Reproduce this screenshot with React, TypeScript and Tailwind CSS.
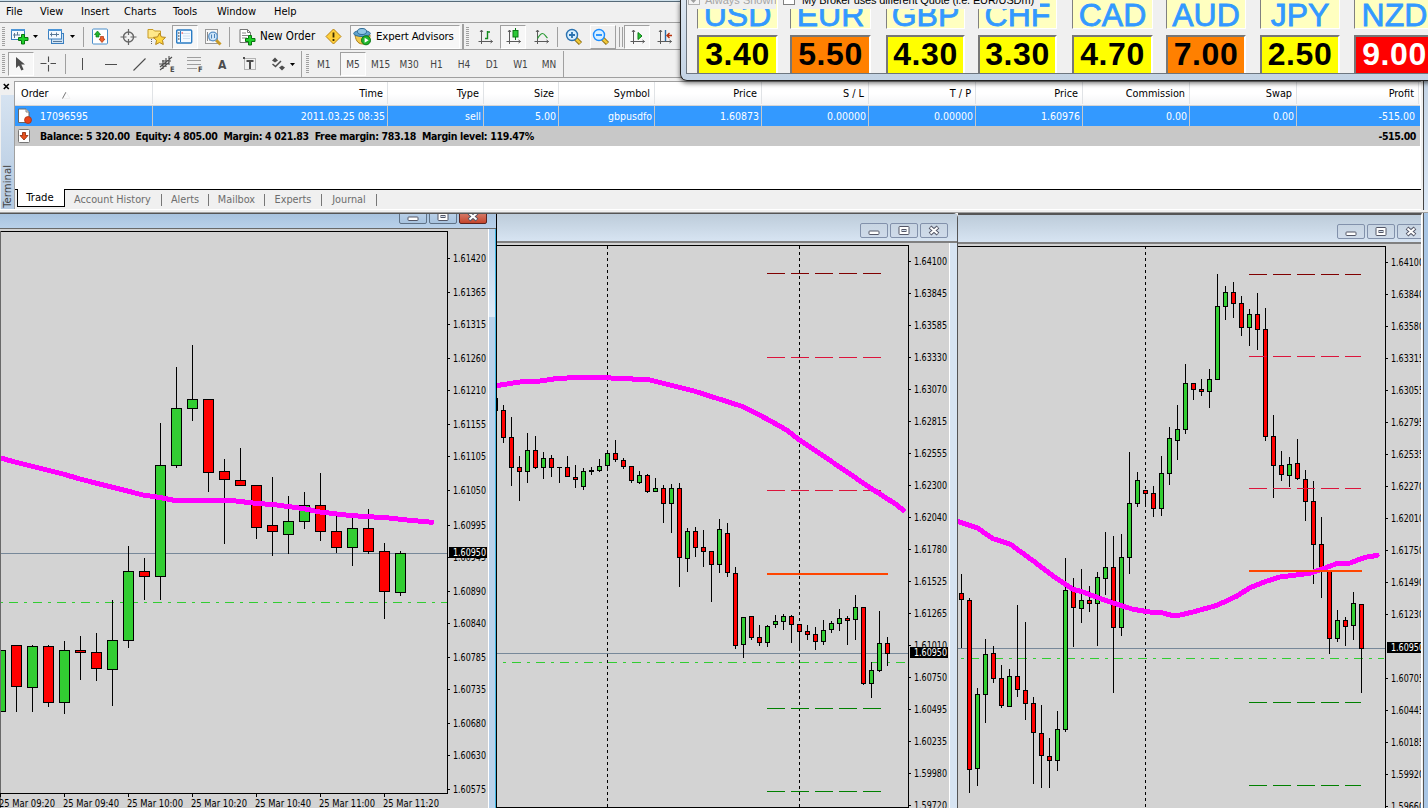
import React from "react";

type Candle = [number, number, number, number, "g" | "r"];

const FILL = { g: "#32cd32", r: "#ff0000" };
const UI = "font-['DejaVu_Sans_Condensed','DejaVu_Sans',sans-serif]";

/* Candles are [high, low, bodyTop, bodyBottom, direction] in pixel rows. */
const LEFT: Candle[] = [
  [650, 712, 650, 712, "g"], [645, 712, 645, 687, "r"], [645, 712, 646, 688, "g"], [645, 707, 646, 703, "r"],
  [641, 714, 650, 703, "g"], [636, 680, 650, 653, "r"], [633, 681, 652, 669, "r"], [600, 706, 640, 670, "g"],
  [546, 648, 571, 641, "g"], [558, 600, 571, 577, "r"], [423, 600, 465, 577, "g"], [367, 468, 408, 466, "g"],
  [345, 421, 399, 409, "g"], [399, 492, 399, 473, "r"], [459, 544, 471, 480, "r"], [448, 486, 480, 486, "r"],
  [485, 539, 485, 528, "r"], [477, 556, 525, 532, "r"], [496, 554, 521, 535, "g"], [492, 529, 505, 522, "g"],
  [473, 541, 505, 532, "r"], [513, 553, 531, 548, "r"], [517, 566, 528, 548, "g"], [509, 554, 528, 552, "r"],
  [543, 619, 551, 592, "r"], [551, 596, 553, 593, "g"],
];
const MIDDLE: Candle[] = [
  [405, 443, 410, 438, "r"], [417, 486, 437, 468, "r"], [456, 501, 467, 472, "r"], [433, 483, 450, 472, "g"],
  [436, 469, 450, 468, "r"], [452, 479, 458, 468, "g"], [455, 477, 458, 468, "r"], [467, 483, 467, 468, "r"],
  [456, 477, 467, 477, "r"], [465, 488, 477, 480, "r"], [468, 490, 471, 487, "g"], [467, 475, 470, 472, "r"],
  [459, 472, 466, 471, "g"], [450, 470, 453, 466, "g"], [440, 462, 453, 460, "r"], [458, 469, 460, 467, "r"],
  [466, 483, 466, 481, "r"], [471, 484, 475, 483, "g"], [474, 493, 475, 492, "r"], [478, 492, 488, 492, "g"],
  [485, 523, 488, 504, "r"], [484, 533, 488, 504, "g"], [483, 587, 488, 558, "r"], [528, 572, 531, 559, "g"],
  [527, 557, 531, 548, "r"], [530, 567, 547, 552, "r"], [551, 602, 551, 565, "r"], [519, 573, 529, 565, "g"],
  [523, 577, 533, 573, "r"], [567, 649, 573, 646, "r"], [617, 658, 617, 645, "g"], [616, 640, 616, 638, "r"],
  [625, 646, 637, 643, "r"], [625, 647, 626, 643, "g"], [615, 628, 621, 625, "g"], [614, 630, 616, 622, "g"],
  [615, 643, 616, 625, "r"], [624, 650, 624, 632, "r"], [625, 640, 631, 635, "r"], [627, 650, 634, 642, "r"],
  [620, 645, 630, 642, "g"], [621, 633, 623, 630, "g"], [609, 631, 618, 624, "g"], [616, 645, 618, 621, "r"],
  [595, 640, 607, 620, "g"], [607, 685, 607, 684, "r"], [662, 698, 670, 684, "g"], [611, 672, 643, 671, "g"],
  [637, 666, 643, 654, "r"],
];
const RIGHT: Candle[] = [
  [574, 648, 593, 600, "r"], [598, 793, 600, 770, "r"], [688, 786, 694, 769, "g"], [639, 723, 654, 695, "g"],
  [646, 683, 653, 679, "r"], [665, 708, 678, 706, "r"], [669, 707, 676, 707, "g"], [605, 697, 676, 690, "r"],
  [622, 720, 690, 704, "r"], [697, 784, 703, 733, "r"], [705, 788, 733, 756, "r"], [738, 788, 756, 761, "r"],
  [711, 771, 729, 761, "g"], [558, 732, 590, 730, "g"], [578, 647, 590, 608, "r"], [569, 623, 600, 609, "g"],
  [586, 612, 600, 604, "r"], [572, 646, 577, 604, "g"], [532, 595, 567, 579, "g"], [536, 693, 567, 628, "r"],
  [534, 636, 557, 628, "g"], [452, 574, 503, 558, "g"], [472, 507, 480, 504, "g"], [490, 505, 490, 494, "r"],
  [486, 517, 493, 509, "r"], [456, 516, 473, 509, "g"], [427, 485, 438, 474, "g"], [405, 460, 429, 441, "g"],
  [364, 434, 383, 430, "g"], [383, 400, 383, 390, "r"], [379, 396, 389, 392, "r"], [369, 408, 379, 392, "g"],
  [274, 380, 306, 380, "g"], [286, 320, 292, 307, "g"], [282, 318, 292, 304, "r"], [296, 336, 303, 328, "r"],
  [309, 346, 314, 328, "g"], [293, 350, 314, 330, "r"], [308, 441, 329, 437, "r"], [415, 498, 436, 466, "r"],
  [451, 481, 465, 475, "r"], [457, 487, 464, 476, "g"], [439, 480, 463, 479, "r"], [470, 521, 479, 502, "r"],
  [481, 584, 501, 545, "r"], [517, 598, 544, 572, "r"], [570, 654, 570, 639, "r"], [610, 642, 620, 639, "g"],
  [617, 646, 620, 627, "r"], [592, 640, 603, 626, "g"], [604, 693, 604, 649, "r"],
];

function Candles({ data, x, step, half }: { data: Candle[]; x: number; step: number; half: number }) {
  return (
    <g>
      {data.map(([hi, lo, top, bottom, dir], i) => {
        const cx = x + i * step;
        return (
          <g key={i}>
            <rect x={cx} y={hi} width={1} height={lo - hi} fill="#000" />
            <rect x={cx - half} y={top} width={half * 2 + 1} height={bottom - top} fill="#000" />
            {bottom - top > 2 && (
              <rect x={cx - half + 1} y={top + 1} width={half * 2 - 1} height={bottom - top - 2} fill={FILL[dir]} />
            )}
          </g>
        );
      })}
    </g>
  );
}

function Label({ x, y, children, fill = "#000", w = 33 }: { x: number; y: number; children: string; fill?: string; w?: number }) {
  return (
    <text x={x} y={y} fontSize={9.6} fill={fill} textLength={w} lengthAdjust="spacingAndGlyphs" fontFamily="DejaVu Sans Condensed, DejaVu Sans, sans-serif">
      {children}
    </text>
  );
}

function PriceAxis({ x, ticks }: { x: number; ticks: [number, string][] }) {
  return (
    <g>
      {ticks.map(([y, v]) => (
        <g key={v}>
          <rect x={x + 1} y={y} width={2} height={1} fill="#000" />
          <Label x={x + 6} y={y + 3.5}>{v}</Label>
        </g>
      ))}
    </g>
  );
}

function PriceTag({ x, y, w = 38 }: { x: number; y: number; w?: number }) {
  return (
    <g>
      <rect x={x} y={y} width={w} height={11} fill="#000" />
      <Label x={x + 4} y={y + 9} fill="#fff">1.60950</Label>
    </g>
  );
}

const series = (start: number, step: number, values: string[]): [number, string][] =>
  values.map((v, i) => [start + i * step, v]);

const LEFT_TICKS: [number, string][] = [
  [258, "1.61420"], [292, "1.61365"], [324, "1.61315"], [358, "1.61260"], [390, "1.61210"], [424, "1.61155"],
  [456, "1.61105"], [490, "1.61050"], [525, "1.60995"], [557, "1.60945"], [591, "1.60890"], [623, "1.60840"],
  [657, "1.60785"], [689, "1.60735"], [723, "1.60680"], [755, "1.60630"], [789, "1.60575"],
];
const MID_TICKS = series(261, 32, [
  "1.64100", "1.63845", "1.63585", "1.63330", "1.63070", "1.62815", "1.62555", "1.62300", "1.62040",
  "1.61780", "1.61525", "1.61265", "1.61010", "1.60750", "1.60495", "1.60235", "1.59980", "1.59720",
]);
const RIGHT_TICKS = series(262, 32, [
  "1.64100", "1.63840", "1.63580", "1.63315", "1.63055", "1.62795", "1.62535", "1.62270", "1.62010",
  "1.61750", "1.61490", "1.61230", "1.60970", "1.60705", "1.60445", "1.60185", "1.59920", "1.59660",
]).filter(([, v]) => v !== "1.60970");

function Average({ points }: { points: string }) {
  return <polyline points={points} fill="none" stroke="#ff00ff" strokeWidth={5} strokeLinejoin="round" strokeLinecap="round" />;
}

function Levels({ x, to, rows }: { x: number; to: number; rows: [number, string][] }) {
  return (
    <g>
      {rows.map(([y, c]) => (
        <line key={y} x1={x} x2={to} y1={y + 0.5} y2={y + 0.5} stroke={c} strokeDasharray="18 6" />
      ))}
    </g>
  );
}

function LeftChart() {
  return (
    <svg className="block shrink-0" width={488} height={579} viewBox="0 229 488 579" shapeRendering="crispEdges">
      <rect x={0} y={229} width={488} height={579} fill="#d3d3d3" />
      <rect x={0} y={231} width={448} height={1} fill="#000" />
      <rect x={0} y={553} width={447} height={1} fill="#778899" />
      <line x1={-15} x2={447} y1={602.5} y2={602.5} stroke="#32cd32" strokeDasharray="9 6 3 6" />
      <Candles data={LEFT} x={0} step={16} half={5} />
      <Average points="-3,457 15,462 63,474 80,479 143,495 160,497.5 175,500.5 232,500.5 257,503.5 273,504.5 303,508.5 320,512 350,515.5 387,517.8 407,520 432,522.3" />
      <rect x={0} y={231} width={1} height={577} fill="#696969" />
      <rect x={447} y={231} width={1} height={563} fill="#000" />
      <rect x={0} y={793} width={448} height={1} fill="#000" />
      <PriceAxis x={447} ticks={LEFT_TICKS} />
      <PriceTag x={449} y={547} />
      {["09:20", "09:40", "10:00", "10:20", "10:40", "11:00", "11:20"].map((t, i) => (
        <g key={t}>
          <rect x={i * 64} y={794} width={1} height={3} fill="#000" />
          <Label x={i * 64 - 1} y={806.5} w={56}>{"25 Mar " + t}</Label>
        </g>
      ))}
    </svg>
  );
}

function MiddleChart() {
  return (
    <svg className="block shrink-0" width={452} height={565} viewBox="497 243 452 565" shapeRendering="crispEdges">
      <rect x={497} y={243} width={452} height={565} fill="#d3d3d3" />
      <rect x={497} y={245} width={412} height={1} fill="#000" />
      <line x1={607.5} x2={607.5} y1={246} y2={807} stroke="#000" strokeDasharray="3 3" />
      <line x1={799.5} x2={799.5} y1={246} y2={807} stroke="#000" strokeDasharray="3 3" />
      <rect x={497} y={653} width={411} height={1} fill="#778899" />
      <line x1={488} x2={906} y1={662.5} y2={662.5} stroke="#32cd32" strokeDasharray="9 6 3 6" />
      <rect x={497} y={398} width={1} height={13} fill="#000" />
      <Candles data={MIDDLE} x={503} step={8} half={2} />
      <Levels x={767} to={881} rows={[[273, "#800000"], [357, "#dc143c"], [490, "#dc143c"], [708, "#008000"], [791, "#008000"]]} />
      <Average points="494,386 523,381.5 540,381 557,378.5 577,377.5 600,377.5 627,378.7 650,380 670,385 693,390.7 720,399.3 742,406.3 767,419 787,430.3 799,439.7 823,455.7 843,469.3 867,485.7 897,505 903,510" />
      <rect x={767} y={573} width={121} height={2} fill="#ff4500" />
      <rect x={908} y={245} width={1} height={563} fill="#000" />
      <rect x={497} y={807} width={412} height={1} fill="#000" />
      <PriceAxis x={908} ticks={MID_TICKS} />
      <PriceTag x={910} y={647} />
    </svg>
  );
}

function RightChart() {
  return (
    <svg className="block shrink-0" width={463} height={564} viewBox="958 244 463 564" shapeRendering="crispEdges">
      <rect x={958} y={244} width={463} height={564} fill="#d3d3d3" />
      <rect x={958} y={246} width={428} height={1} fill="#000" />
      <line x1={1145.5} x2={1145.5} y1={246} y2={808} stroke="#000" strokeDasharray="3 3" />
      <rect x={958} y={648} width={427} height={1} fill="#778899" />
      <line x1={946} x2={1384} y1={658.5} y2={658.5} stroke="#32cd32" strokeDasharray="9 6 3 6" />
      <Candles data={RIGHT} x={961} step={8} half={2} />
      <Levels x={1249} to={1361} rows={[[274, "#800000"], [356, "#dc143c"], [488, "#dc143c"], [702, "#008000"], [785, "#008000"]]} />
      <Average points="955,520.5 978,528.3 985,533.3 993,538.7 1010,544 1033,560.7 1053,576 1073,589.3 1083,592 1097,597.3 1113,603 1133,609.3 1150,612 1162,612.7 1172,615.5 1180,615 1193,612 1217,605.3 1237,596 1250,587.7 1267,581 1280,577 1310,573.3 1327,567.3 1337,563.5 1350,563 1365,557.3 1377,555.5" />
      <rect x={1249} y={570} width={113} height={2} fill="#ff4500" />
      <rect x={1385} y={246} width={1} height={562} fill="#000" />
      <PriceAxis x={1385} ticks={RIGHT_TICKS} />
      <PriceTag x={1387} y={642} />
    </svg>
  );
}

function CaptionButton({ kind, active = false }: { kind: "min" | "max" | "close"; active?: boolean }) {
  const red = active && kind === "close";
  return (
    <div
      className={
        "flex h-[15px] w-[28px] shrink-0 items-center justify-center rounded-[2px] border " +
        (red
          ? "border-[#5a2320] bg-gradient-to-b from-[#d98a7c] to-[#c4452b]"
          : active
            ? "border-[#5f7287] bg-gradient-to-b from-[#bdd3ea] to-[#a9c4e0]"
            : "border-[#8291ab] bg-gradient-to-b from-[#c8d5e2] to-[#cfdbea]")
      }
    >
      <svg width={13} height={11} viewBox="0 0 13 11">
        {kind === "min" && <rect x={1} y={6} width={10} height={3.5} rx={0.8} fill="#fff" stroke="#535666" />}
        {kind === "max" && (
          <g stroke="#535666">
            <rect x={1} y={1.5} width={10} height={8} rx={0.8} fill="#fff" />
            <rect x={4} y={4.5} width={4} height={2} fill="#cfdbea" />
          </g>
        )}
        {kind === "close" && (
          <g fill="none">
            <path d="M2 2l8 7M10 2l-8 7" stroke="#535666" strokeWidth={4} />
            <path d="M2.500 2.400l7 6.200M9.500 2.400l-7 6.200" stroke="#fff" strokeWidth={2} />
          </g>
        )}
      </svg>
    </div>
  );
}

function Grip() {
  return (
    <svg className="shrink-0" width={4} height={20} viewBox="0 0 4 20" shapeRendering="crispEdges">
      {Array.from({ length: 10 }, (_, i) => (
        <rect key={i} x={0} y={i * 2} width={3} height={1} fill="#a0a0a0" />
      ))}
    </svg>
  );
}

function Slot({ className, children }: { className: string; children?: React.ReactNode }) {
  return <div className={"flex h-full shrink-0 items-center " + className}>{children}</div>;
}

function Pressed({ className, children }: { className: string; children?: React.ReactNode }) {
  return (
    <div className={"flex h-6 shrink-0 items-center border border-t-[#a0a0a0] border-l-[#a0a0a0] border-r-white border-b-white bg-[#f7f7f7] " + className}>
      {children}
    </div>
  );
}

const Sep = () => <div className="h-5 w-px bg-[#a0a0a0]" />;

function Icon({ children, size = 18 }: { children: React.ReactNode; size?: number }) {
  return <svg className="shrink-0" width={size} height={size} viewBox={`0 0 ${size} ${size}`}>{children}</svg>;
}

const Caret = () => (
  <svg className="shrink-0" width={5} height={3} viewBox="0 0 5 3"><path d="M0 0h5L2.500 3z" fill="#000" /></svg>
);

const Plus = ({ x, y }: { x: number; y: number }) => (
  <path transform={`translate(${x} ${y})`} d="M3.500 0.500h3v3h3.500v3h-3.500v3.500h-3v-3.500h-3v-3h3z" fill="#1fd02a" stroke="#07760f" />
);

function Lens({ color, minus }: { color: string; minus?: boolean }) {
  return (
    <Icon>
      <path d="M10.500 10.500l5 5" stroke="#8a6a10" strokeWidth={4.500} />
      <path d="M10.500 10.500l4.700 4.700" stroke="#f0c93a" strokeWidth={2.600} />
      <circle cx={7} cy={7} r={5.500} fill="#d8efff" stroke={color} strokeWidth={1.400} />
      <path d={minus ? "M4 7h6" : "M4 7h6M7 4v6"} stroke={color} strokeWidth={1.800} />
    </Icon>
  );
}

const Axes = () => (
  <path d="M3.500 2v14M0.500 13.500h14M2 4l1.500-2 1.500 2M12.500 12l2 1.500-2 1.500" fill="none" stroke="#5a5a5a" />
);

function MainToolbar() {
  return (
    <div className="flex h-[27px] items-center border-b border-[#a0a0a0] pt-px">
      <Slot className="w-[10px] pl-0.5"><Grip /></Slot>
      <Slot className="w-[22px] pl-px">
        <Icon>
          <rect x={0.500} y={1.500} width={13} height={10} fill="#f4faff" stroke="#3a7fc0" />
          <rect x={0} y={1} width={14} height={2} fill="#4d96d8" />
          <path d="M3.500 5v5M2 7h7M6.500 4v3" stroke="#5a7896" />
          <Plus x={7} y={6} />
        </Icon>
      </Slot>
      <Slot className="w-[15px] pl-px"><Caret /></Slot>
      <Slot className="w-[22px] pl-px">
        <Icon>
          <rect x={3.500} y={5.500} width={12} height={10} fill="#cfe3f5" stroke="#3a7fc0" />
          <rect x={0.500} y={1.500} width={13} height={9.500} fill="#f4faff" stroke="#3a7fc0" />
          <rect x={0} y={1} width={14} height={2} fill="#4d96d8" />
          <path d="M3.500 4.500v4M2 6.500h9M8.500 4.500v4" stroke="#5a7896" />
          <path d="M5 13.500h9" stroke="#5a7896" />
        </Icon>
      </Slot>
      <Slot className="w-[14px] pl-px"><Caret /></Slot>
      <Slot className="w-[8px]"><Sep /></Slot>
      <Slot className="w-[29px] pl-px">
        <Icon>
          <rect x={0.500} y={1} width={15} height={15} rx={1} fill="#fff" stroke="#4a8fcc" />
          <path d="M2.500 6.500l3-3.500 3 3.500H7v2.500H4V6.500z" fill="#22b52c" stroke="#0a7a14" strokeWidth={0.700} />
          <path d="M7 11h1.500V8.500h3V11H13l-3 3.500z" fill="#f0602a" stroke="#a8320c" strokeWidth={0.700} />
        </Icon>
      </Slot>
      <Slot className="w-[26px]">
        <Icon>
          <circle cx={8.500} cy={9} r={5} fill="none" stroke="#666" strokeWidth={1.400} />
          <path d="M8.500 1v6M8.500 11v6M0.500 9h6M10.500 9h6" stroke="#666" strokeWidth={1.200} />
        </Icon>
      </Slot>
      <Slot className="w-[26px] pl-px">
        <Icon size={19}>
          <path d="M1 2.500h5l1.500 1.500h6v7H1z" fill="#ffe88a" stroke="#c79a22" />
          <path d="M4.500 12v5" stroke="#666" strokeDasharray="1 1" />
          <path d="M12.500 6l1.900 3.900 4.100.5-3 2.900.8 4.200-3.800-2-3.800 2 .8-4.200-3-2.900 4.100-.5z" fill="#ffd742" stroke="#b4841a" />
        </Icon>
      </Slot>
      <Pressed className="w-[26px] pl-[3px]">
        <Icon size={17}>
          <rect x={0.700} y={2} width={15} height={13} rx={1} fill="#f5faff" stroke="#2a7cc4" strokeWidth={1.400} />
          <path d="M4.500 3v11" stroke="#2a7cc4" />
          <path d="M7 5.500h7M7 8h7M7 10.500h7" stroke="#cfe0f0" />
          <path d="M2 5h1.500M2 8h1.500M2 11h1.500" stroke="#222" />
          <path d="M5.500 5h1.500" stroke="#e22" />
        </Icon>
      </Pressed>
      <Slot className="w-[31px] pl-[6px]">
        <Icon>
          <rect x={1.500} y={1.500} width={12} height={14} fill="#f8f8f8" stroke="#999" />
          <path d="M3.500 4v9M5 12h6" stroke="#888" />
          <path d="M12 12l4.500 4.500" stroke="#c89a28" strokeWidth={3} />
          <circle cx={9} cy={8.500} r={4.300} fill="#cfe6fa" stroke="#5a92c8" strokeWidth={1.300} />
          <path d="M7.500 6.500v4M10.500 6v4" stroke="#4a82b8" />
        </Icon>
      </Slot>
      <Slot className="w-[9px]"><Sep /></Slot>
      <Slot className="w-[21px] pl-px">
        <Icon>
          <path d="M1 1.500h7.500l3 3v10H1z" fill="#fff" stroke="#777" />
          <path d="M8.500 1.500v3h3" fill="none" stroke="#777" />
          <path d="M3 5h4M3 7.500h6M3 10h5" stroke="#888" />
          <Plus x={6} y={7} />
        </Icon>
      </Slot>
      <Slot className="w-[65px] pt-px pl-px text-[11.5px] whitespace-nowrap">New Order</Slot>
      <Slot className="w-[26px] pl-px">
        <Icon size={17}>
          <path d="M8.500 1L16 8.500 8.500 16 1 8.500z" fill="#ffcf3a" stroke="#b98412" strokeLinejoin="round" />
          <path d="M8.500 4.500v5M8.500 11v2" stroke="#3a2c00" strokeWidth={1.800} />
        </Icon>
      </Slot>
      <Pressed className="w-[110px] gap-[4px] pl-[2px]">
        <Icon size={19}>
          <path d="M2 8c1 7 4 9 8 9s7-3 7-9z" fill="#f2ca4e" stroke="#a97e1a" />
          <ellipse cx={9} cy={6.500} rx={8.300} ry={3} fill="#5fa3cf" stroke="#2d6b94" />
          <ellipse cx={9} cy={4.500} rx={4.500} ry={3} fill="#8fc6e6" stroke="#2d6b94" />
          <circle cx={13} cy={13.300} r={4.500} fill="#22b52c" stroke="#0a7a14" />
          <path d="M11.600 10.800v5l4-2.500z" fill="#fff" />
        </Icon>
        <span className="pt-px text-[11.3px] tracking-[-0.12px] whitespace-nowrap">Expert Advisors</span>
      </Pressed>
      <Slot className="w-[6px] pl-0.5"><div className="h-[26px] w-0.5 bg-[#a0a0a0]" /></Slot>
      <Slot className="w-[11px]"><Grip /></Slot>
      <Slot className="w-[23px] pl-px">
        <Icon><Axes /><path d="M7 10.500h2.500v-6.500h2.500M9.500 4v-1" fill="none" stroke="#138a1d" strokeWidth={1.400} /></Icon>
      </Slot>
      <Pressed className="w-[26px] pl-[5px]">
        <Icon><Axes /><path d="M9.500 0v12" stroke="#0a7a14" /><rect x={7} y={2.500} width={5} height={6.500} fill="#2cc836" stroke="#0a7a14" /></Icon>
      </Pressed>
      <Slot className="w-[31px] pl-[8px]">
        <Icon><Axes /><path d="M3.500 10.500c2-3 3-5 5-5s3 2.500 5 4.500" fill="none" stroke="#2a9a34" strokeWidth={1.200} /></Icon>
      </Slot>
      <Slot className="w-[8px]"><Sep /></Slot>
      <Slot className="w-[25px]"><Lens color="#2a72b0" /></Slot>
      <div className="flex h-6 w-[26px] shrink-0 items-center border border-t-white border-l-white border-r-[#a0a0a0] border-b-[#a0a0a0] pl-px">
        <Lens color="#1a8cff" minus />
      </div>
      <Slot className="w-[8px] gap-0.5 pl-[3px]"><Sep /><Sep /></Slot>
      <Pressed className="w-[26px] pl-[5px]">
        <Icon><Axes /><path d="M8 4.500v7l4-3.500z" fill="#2cc836" stroke="#0a7a14" /></Icon>
      </Pressed>
      <Slot className="w-[30px] pl-[7px]">
        <Icon><Axes /><path d="M8.500 2v11" stroke="#2a6ca8" strokeWidth={1.400} /><path d="M10 7.500h5M12.500 5l-2.500 2.500 2.500 2.500" fill="none" stroke="#b8320c" strokeWidth={1.400} /></Icon>
      </Slot>
    </div>
  );
}

function DrawToolbar() {
  return (
    <div className="flex h-[27px] items-center border-b border-[#a0a0a0] text-[#4d4d4d]">
      <Slot className="w-[8px] pl-0.5"><Grip /></Slot>
      <Pressed className="w-[26px] pl-[6px]">
        <Icon size={16}><path d="M1 1l0 11 3-2.500 2.300 5 2.300-1-2.300-5H10z" fill="#4d4d4d" /></Icon>
      </Pressed>
      <Slot className="w-[31px] pl-[6px]">
        <Icon size={16}><path d="M8.500 0.500v5.500M8.500 9v6.500M0.500 7.500h6M10.500 7.500h5.500" stroke="#4d4d4d" strokeWidth={1.100} /></Icon>
      </Slot>
      <Slot className="w-[17px]"><Sep /></Slot>
      <Slot className="w-[23px]"><div className="h-3 w-px bg-[#4d4d4d]" /></Slot>
      <Slot className="w-[28px]"><div className="h-px w-3 bg-[#4d4d4d]" /></Slot>
      <Slot className="w-[26px]"><Icon size={13}><path d="M0.500 12.500l12-12" stroke="#4d4d4d" strokeWidth={1.100} /></Icon></Slot>
      <Slot className="w-[28px]">
        <Icon size={18}>
          <path d="M1 12L13 2M1 15L10 7.500M4 5v9M7 3v9M10 1v9M0 9h8M3 6h9" stroke="#4d4d4d" strokeWidth={1.100} />
          <text x={11} y={17} fontSize={7.5} fontWeight={700} fill="#4d4d4d" fontFamily="DejaVu Sans Condensed">E</text>
        </Icon>
      </Slot>
      <Slot className="w-[31px]">
        <Icon size={18}>
          <path d="M0.500 2.500h14M0.500 5.500h14M0.500 9.500h14M0.500 13.500h9" stroke="#4d4d4d" strokeDasharray="1 1" />
          <text x={11} y={17} fontSize={7.5} fontWeight={700} fill="#4d4d4d" fontFamily="DejaVu Sans Condensed">F</text>
        </Icon>
      </Slot>
      <Slot className="w-[25px] pt-px text-[12px] font-bold">A</Slot>
      <Slot className="w-[28px]">
        <Icon size={14}>
          <rect x={1.500} y={1.500} width={11} height={11} fill="none" stroke="#777" strokeDasharray="1 1" />
          <rect x={0} y={0} width={2} height={2} fill="#4d4d4d" />
          <path d="M3.500 4h7M7 4v8" stroke="#4d4d4d" strokeWidth={2} />
        </Icon>
      </Slot>
      <Slot className="w-[19px]">
        <Icon size={16}>
          <path d="M1 4.500l3-3 3 3-3 2z M8 11.500l3-2 3 2-3 3z" fill="#4d4d4d" />
          <path d="M1.500 8l3 2.500L10 5" fill="none" stroke="#4d4d4d" strokeWidth={1.500} />
        </Icon>
      </Slot>
      <Slot className="w-[11px]"><Caret /></Slot>
      <Slot className="w-[5px]"><div className="h-[26px] w-px bg-[#a0a0a0]" /></Slot>
      <Slot className="w-[8px]"><Grip /></Slot>
      <div className="flex items-center text-[10px] text-[#444]">
        <span className="w-[26px] pt-px pl-[3px]">M1</span>
        <Pressed className="w-[26px] justify-center pt-px">M5</Pressed>
        <span className="w-[29px] pt-px text-center">M15</span>
        <span className="w-[28px] pt-px text-center">M30</span>
        <span className="w-[27px] pt-px text-center">H1</span>
        <span className="w-[28px] pt-px text-center">H4</span>
        <span className="w-[28px] pt-px text-center">D1</span>
        <span className="w-[29px] pt-px text-center">W1</span>
        <span className="w-[28px] pt-px text-center">MN</span>
      </div>
      <Slot className="w-[2px]"><div className="h-[26px] w-px bg-[#a0a0a0]" /></Slot>
    </div>
  );
}

const COLUMNS: [string, string, string][] = [
  ["w-[235px]", "Time", "2011.03.25 08:35"],
  ["w-[96px]", "Type", "sell"],
  ["w-[75px]", "Size", "5.00"],
  ["w-[96px]", "Symbol", "gbpusdfo"],
  ["w-[107px]", "Price", "1.60873"],
  ["w-[107px]", "S / L", "0.00000"],
  ["w-[107px]", "T / P", "0.00000"],
  ["w-[107px]", "Price", "1.60976"],
  ["w-[107px]", "Commission", "0.00"],
  ["w-[107px]", "Swap", "0.00"],
  ["w-[122px]", "Profit", "-515.00"],
];

function Terminal() {
  return (
    <div className="flex h-[129px] border-b border-white">
      <div className="flex w-[14px] shrink-0 flex-col items-center">
        <svg className="mt-px mr-0.5 h-[9px] shrink-0" width={7} height={6} viewBox="0 0 7 6"><path d="M0.800 0.500l5 5M5.800 0.500l-5 5" stroke="#000" strokeWidth={1.600} /></svg>
        <div className="mt-[4px] flex min-h-0 w-[13px] flex-1 items-start justify-center bg-gradient-to-b from-[#d6e3f1] to-[#b4c9e0] pt-[68px] [writing-mode:vertical-rl]">
          <span className="rotate-180 text-[11.3px] leading-[13px] text-[#444]">Terminal</span>
        </div>
      </div>
      <div className="flex w-[1407px] flex-col border-l border-[#a0a0a0]">
        <div className="flex min-h-0 flex-1 flex-col border-t border-[#a0a0a0] bg-white text-[10.5px]">
          <div className="flex h-6 w-[1405px] border-b border-[#d5d5d5] bg-gradient-to-b from-white from-50% to-[#f3f4f6] pb-px">
            <div className="flex w-[138px] items-center gap-[13px] border-r border-[#e0e3e6] pt-[3px] pl-[6px] text-[10.8px]">
              Order
              <svg width={9} height={8} viewBox="0 0 9 8"><path d="M0.500 7.500L4 1" stroke="#777" fill="none" /><path d="M4 1l4 6.500H1" stroke="#f1f1f1" fill="none" /></svg>
            </div>
            {COLUMNS.map(([w, head], i) => (
              <div key={i} className={"flex items-center justify-end border-r border-[#e0e3e6] pt-[3px] pr-[4px] text-[10.8px] " + w}>{head}</div>
            ))}
          </div>
          <div className="flex h-5 w-[1405px] bg-[#3399ff] text-white">
            <div className="flex w-[138px] items-center gap-[8px] border-r border-[#c8c8c8] pl-[3px]">
              <svg width={14} height={16} viewBox="0 0 14 16">
                <path d="M0.500 1h7.500l3 3v10.500H0.500z" fill="#fff" stroke="#666" />
                <path d="M8 1v3h3" fill="#ddd" stroke="#888" />
                <circle cx={10} cy={12} r={3.500} fill="#e8441c" stroke="#a82c08" strokeWidth={0.700} />
              </svg>
              <span className="pt-0.5">17096595</span>
            </div>
            {COLUMNS.map(([w, , cell], i) => (
              <div key={i} className={"flex items-center justify-end pt-0.5 pr-0.5 " + (i < 10 ? "border-r border-[#c8c8c8] " : "pr-[4px] ") + w}>{cell}</div>
            ))}
          </div>
          <div className="flex h-5 w-[1405px] items-center justify-between bg-[#c8c8c8] pr-[4px] pl-[3px] text-[10.5px] font-bold">
            <div className="flex items-center gap-[10px]">
              <svg width={12} height={14} viewBox="0 0 12 14">
                <rect x={0.500} y={0.500} width={11} height={13} rx={1} fill="#fff" stroke="#777" />
                <path d="M4.500 3.500h3v3h2.500L6 11 2 6.500h2.500z" fill="#e8501c" stroke="#8a2408" strokeWidth={0.800} />
              </svg>
              <span className="pt-px tracking-[-0.33px] whitespace-pre">Balance: 5 320.00  Equity: 4 805.00  Margin: 4 021.83  Free margin: 783.18  Margin level: 119.47%</span>
            </div>
            <span className="pt-px tracking-[-0.4px]">-515.00</span>
          </div>
        </div>
        <div className="flex h-[20px] items-start bg-[#f0f0f0] text-[10.8px] text-[#6d6d6d]">
          <div className="h-px w-[2px] bg-black" />
          <div className="flex h-[18px] w-[48px] items-center justify-center border-x border-b border-black bg-white pt-0.5 pr-0.5 text-[11.2px] text-black">Trade</div>
          <div className="flex h-[19px] flex-1 items-center border-t border-black pt-0.5">
            <span className="w-[96px] pl-[9px] whitespace-nowrap">Account History</span>
            <div className="h-3 w-px bg-[#777]" />
            <span className="w-[46px] text-center">Alerts</span>
            <div className="h-3 w-px bg-[#777]" />
            <span className="w-[55px] text-center">Mailbox</span>
            <div className="h-3 w-px bg-[#777]" />
            <span className="w-[56px] text-center">Experts</span>
            <div className="h-3 w-px bg-[#777]" />
            <span className="w-[54px] text-center">Journal</span>
            <div className="h-3 w-px bg-[#777]" />
          </div>
        </div>
      </div>
    </div>
  );
}

const METERS: [string, string, string, string][] = [
  ["USD", "3.40", "w-[81px] mr-[12px]", "bg-[#ffff00] text-black"],
  ["EUR", "5.50", "w-[81px] mr-[15px]", "bg-[#ff8000] text-black"],
  ["GBP", "4.30", "w-[79px] mr-[13px]", "bg-[#ffff00] text-black"],
  ["CHF", "3.30", "w-[79px] mr-[15px]", "bg-[#ffff00] text-black"],
  ["CAD", "4.70", "w-[81px] mr-[13px]", "bg-[#ffff00] text-black"],
  ["AUD", "7.00", "w-[80px] mr-[14px]", "bg-[#ff8000] text-black"],
  ["JPY", "2.50", "w-[80px] mr-[14px]", "bg-[#ffff00] text-black"],
  ["NZD", "9.00", "w-[81px]", "bg-[#ff0000] text-white"],
];

function StrengthMeter() {
  return (
    <div className="absolute top-0 left-[680px] h-[81px] w-[770px] rounded-bl-[7px] border-b border-l border-[#222] bg-gradient-to-b from-[#dbe6f2] to-[#c3d3e4] pb-[6px] pl-[5px] font-['Liberation_Sans',sans-serif] shadow-[0_2px_5px_rgba(0,0,0,0.6)]">
      <div className="relative flex h-[74px] overflow-hidden border-b border-l border-[#6d7680] bg-[#f0f0f0] pl-[10px]">
        {METERS.map(([name, value, size, tone]) => (
          <div key={name} className={"flex shrink-0 flex-col gap-[6px] " + size}>
            <div className="flex h-[29px] items-start justify-center border-r border-b border-l border-r-white border-b-white border-l-[#808080] bg-[#ffffc0]">
              <span className="-mt-0.5 text-[32px] leading-[34px] text-[#3399ff] [-webkit-text-stroke:0.8px_#3399ff]">{name}</span>
            </div>
            <div className={"flex h-[40px] items-start justify-center border-t-2 border-l-2 border-r-2 border-t-[#777] border-l-[#777] border-r-white " + tone}>
              <span className="text-[32px] leading-[35px] font-bold tracking-[0.6px]">{value}</span>
            </div>
          </div>
        ))}
        <div className="absolute top-0 left-0 flex h-[9px] w-[353px] items-end text-[11px] leading-[9px]">
          <div className="relative h-[9px] w-[89px] overflow-hidden bg-[#f0f0f0]">
            <div className="absolute -top-[7px] left-[1px] h-[12px] w-[12px] border border-[#b0b0b0] bg-[#f4f4f4]">
              <svg width={10} height={10} viewBox="0 0 10 10"><path d="M2 5l2.500 2.500L8.500 3" fill="none" stroke="#a0a0a0" strokeWidth={2} /></svg>
            </div>
            <span className="absolute -top-[4px] left-[18px] whitespace-nowrap text-[#a5a5a5]">Always Shown</span>
          </div>
          <div className="relative ml-[4px] h-[9px] w-[260px] overflow-hidden bg-[#f0f0f0]">
            <div className="absolute -top-[7px] left-[3px] h-[12px] w-[12px] border border-[#808080] bg-white" />
            <span className="absolute -top-[4px] left-[22px] tracking-[-0.15px] whitespace-nowrap text-black">My Broker uses different Quote (i.e. EUR/USDm)</span>
          </div>
        </div>
      </div>
    </div>
  );
}

export default function App() {
  return (
    <div className={"relative flex h-[808px] w-[1428px] flex-col overflow-hidden bg-[#f0f0f0] text-black " + UI}>
      <div className="h-px shrink-0 bg-[#cfe0ea]" />
      <div className="h-px shrink-0 bg-[#566a78]" />
      <div className="flex h-[21px] shrink-0 items-center border-b border-[#a0a0a0] pt-px text-[11px]">
        <span className="w-[40px] pl-[6px]">File</span>
        <span className="w-[41px]">View</span>
        <span className="w-[43px]">Insert</span>
        <span className="w-[49px]">Charts</span>
        <span className="w-[44px]">Tools</span>
        <span className="w-[57px]">Window</span>
        <span>Help</span>
      </div>
      <div className="flex h-[58px] shrink-0 flex-col gap-px"><MainToolbar /><DrawToolbar /></div>
      <div className="flex shrink-0 justify-between">
        <Terminal />
        <div className="w-[5px] border-l border-[#444] bg-gradient-to-b from-[#c3d3e4] to-[#dbe7f5]" />
      </div>
      <div className="h-[3px] shrink-0 border-b border-[#a0a0a0] bg-[#f0f0f0]" />
      <div className="flex min-h-0 flex-1">
        <div className="flex w-[496px] shrink-0 flex-col border-t border-[#555] bg-[#b9d1ea]">
          <div className="flex h-[15px] shrink-0 items-end justify-end gap-[2px] overflow-hidden border-b border-[#696969] bg-gradient-to-b from-[#a8c3df] to-[#b9d1ea] pr-[9px] pb-[4px]">
            <CaptionButton kind="min" active /><CaptionButton kind="max" active /><CaptionButton kind="close" active />
          </div>
          <div className="flex">
            <LeftChart />
            <div className="w-px bg-white" />
            <div className="w-[6px] bg-[#b9d1ea]"><div className="h-[88px] bg-gradient-to-b from-[#b9d1ea] to-[#dfeaf6]" /></div>
            <div className="w-px bg-[#3fb4e0]" />
          </div>
        </div>
        <div className="flex w-[462px] shrink-0 flex-col rounded-tr-[5px] border-t border-r border-l border-[#555] border-l-black bg-[#d7e4f2]">
          <div className="flex h-[29px] shrink-0 items-start justify-end gap-[2px] border-b-2 border-[#808080] bg-gradient-to-b from-[#bdccda] to-[#d7e4f2] pt-[9px] pr-[9px]">
            <CaptionButton kind="min" /><CaptionButton kind="max" /><CaptionButton kind="close" />
          </div>
          <div className="flex">
            <MiddleChart />
            <div className="w-px bg-white" />
          </div>
        </div>
        <div className="flex w-[464px] shrink-0 flex-col overflow-hidden border-t-2 border-r border-[#555] border-r-white bg-[#d7e4f2]">
          <div className="flex h-[29px] shrink-0 items-start gap-[2px] border-b-2 border-[#808080] bg-gradient-to-b from-[#bdccda] to-[#d7e4f2] pt-[9px] pl-[379px]">
            <CaptionButton kind="min" /><CaptionButton kind="max" /><CaptionButton kind="close" />
          </div>
          <RightChart />
        </div>
        <div className="w-px shrink-0 bg-[#f0f0f0]" />
        <div className="flex-1 border-l border-[#555] bg-[#a9c6e5]" />
      </div>
      <StrengthMeter />
    </div>
  );
}
